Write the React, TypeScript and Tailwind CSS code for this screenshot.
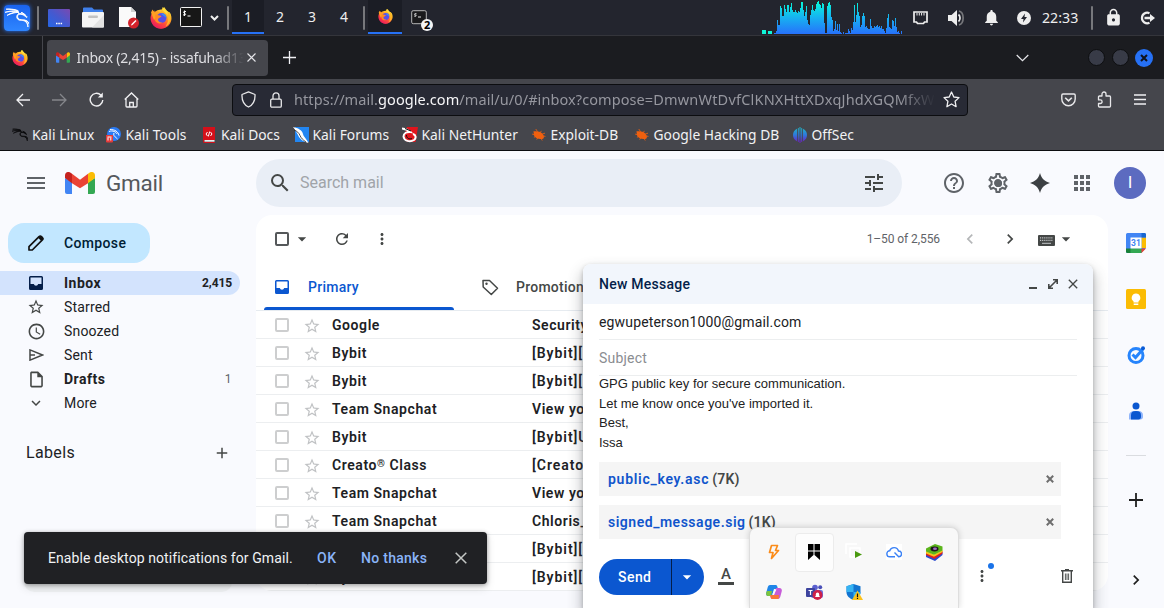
import React from 'react';
import { SiKalilinux } from 'react-icons/si';
import { FaFirefoxBrowser } from 'react-icons/fa';
import {
  MdMenu, MdSearch, MdTune, MdHelpOutline, MdOutlineSettings, MdApps, MdRefresh, MdMoreVert,
  MdArrowDropDown, MdChevronLeft, MdChevronRight, MdStarBorder, MdAccessTime,
  MdOutlineInsertDriveFile, MdExpandMore, MdAdd,
  MdClose, MdLock, MdNotifications,
} from 'react-icons/md';

const cpu = [
  1, 1, 3, 14, 9, 9, 28, 26, 18, 18, 29, 25, 22, 29, 29, 22, 27, 31, 24, 22, 22, 24, 22, 21, 23, 22, 26, 32,
  32, 24, 18, 22, 28, 14, 10, 9, 19, 24, 29, 24, 23, 25, 30, 32, 33, 30, 29, 26, 31, 30, 11, 1, 1, 28, 31, 32,
  29, 17, 14, 3, 5, 13, 4, 10, 3, 10, 2, 1, 0, 2, 0, 1, 1, 1, 5, 3, 1, 6, 4, 12, 29, 12, 19, 31, 22, 18, 7,
  9, 18, 21, 18, 7, 8, 6, 5, 5, 15, 8, 6, 6, 8, 7, 8, 9, 7, 8, 6, 8, 5, 5, 3, 1, 6, 16, 20, 7, 6, 5, 14, 13,
  8, 16, 7, 2, 3, 1, 0, 3,
];

function CpuGraph() {
  return (
    <svg width="142" height="34" viewBox="0 0 142 34" shapeRendering="crispEdges">
      <defs>
        <linearGradient id="cpu" gradientUnits="userSpaceOnUse" x1="0" y1="0" x2="0" y2="34">
          <stop offset="0" stopColor="#04ffd8" />
          <stop offset="0.5" stopColor="#16b4f0" />
          <stop offset="1" stopColor="#2771fb" />
        </linearGradient>
      </defs>
      <rect x="1" y="30" width="4" height="4" fill="#0ff5d8" />
      <rect x="7" y="31" width="4" height="3" fill="#0ff5d8" />
      {cpu.map((h, i) => (
        <rect key={i} x={13 + i} y={34 - h} width="1" height={h} fill="url(#cpu)" />
      ))}
    </svg>
  );
}

function Firefox({ size }: { size: number }) {
  return (
    <svg className="shrink-0" width={size} height={size} viewBox="0 0 22 22">
      <defs>
        <linearGradient id="fx" x1="0.85" y1="0.05" x2="0.2" y2="0.95">
          <stop offset="0" stopColor="#fff14a" />
          <stop offset="0.35" stopColor="#ffa51f" />
          <stop offset="0.65" stopColor="#ff4a3c" />
          <stop offset="1" stopColor="#e9185f" />
        </linearGradient>
      </defs>
      <circle cx="11" cy="12" r="9.500" fill="url(#fx)" />
      <FaFirefoxBrowser size={22} fill="url(#fx)" color="#ff8a1c" />
      <path d="M1 5.500l1.500-3 2 3L7 4l3 3-6 6z" fill="#ffa022" />
      <path d="M12.500 0c-.5 2 .3 3.200 1.800 4.500L19 9l1.500-1c-.8-1.800-1.500-2.500-2.500-3.200-1.200-1-3.500-1.800-5.500-4.800z" fill="#ffe03c" />
      <path d="M17.500 4c2.800 2.500 3.800 6 2.500 10-1 3-2.500 4.500-4.500 5.500 2.500-3.500 3.500-7.500 2-10.500z" fill="#ffb928" />
      <circle cx="11.500" cy="11" r="5" fill="#5a4fe6" />
      <path d="M11 7c2.500-1.500 5.500.5 5.500 4l-2-1.500z" fill="#3a8df5" />
      <path d="M5.500 7.500l6 1.500c-.5 1.500-2.500 1.800-3.500 3-.3 2.500 2 3.800 4.500 3.500-2 1.800-6 1-7.500-2z" fill="#ff8a24" />
    </svg>
  );
}

function GmailMark({ w, h }: { w: number; h: number }) {
  return (
    <svg className="shrink-0" width={w} height={h} viewBox="0 0 30 22">
      <path d="M0 6v14a2 2 0 0 0 2 2h5V10z" fill="#4285f4" />
      <path d="M30 6v14a2 2 0 0 1-2 2h-5V10z" fill="#34a853" />
      <path d="M0 3.300C0 .4 3.300-1 5.600.7L7 1.800v9.500L0 6z" fill="#c5221f" />
      <path d="M30 3.300C30 .4 26.700-1 24.400.7L23 1.800v9.500L30 6z" fill="#fbbc04" />
      <path d="M7 1.800l8 6 8-6v9.500l-8 5-8-5z" fill="#ea4335" />
    </svg>
  );
}

function Dragon({ size, color }: { size: number; color: string }) {
  return <SiKalilinux size={size} color={color} stroke={color} strokeWidth={0.9} />;
}

function PanelSep() {
  return <div className="h-6 w-[2px] shrink-0 rounded bg-[#77787c]" />;
}

function TopPanel() {
  return (
    <div className="relative flex h-[35px] items-center bg-[#23252e] text-[#eeeeee]">
      <div className="ml-[4px] flex h-[26px] w-[26px] items-center justify-center rounded-[4px] bg-[linear-gradient(180deg,#1a63ee,#2f86ff)] shadow-[0_0_4px_#2671f5]">
        <Dragon size={24} color="#fff" />
      </div>
      <div className="ml-[7px]"><PanelSep /></div>
      <svg className="ml-[9px]" width="22" height="18" viewBox="0 0 22 18">
        <defs>
          <linearGradient id="desk" x1="0" y1="1" x2="1" y2="0">
            <stop offset="0" stopColor="#2667e6" />
            <stop offset="0.5" stopColor="#4559cf" />
            <stop offset="1" stopColor="#7a49b0" />
          </linearGradient>
        </defs>
        <rect width="22" height="18" rx="1" fill="url(#desk)" />
        <path d="M8 14.500h1.500M10.300 14.500h1.500M12.600 14.500h1.500" stroke="#fff" strokeWidth="1.500" />
      </svg>
      <svg className="ml-[12px]" width="22" height="21" viewBox="0 0 22 21">
        <path d="M1 1.500A1 1 0 0 1 2 .5h8l2 2h8a1 1 0 0 1 1 1V8H1z" fill="#3f7fea" />
        <rect y="5" width="22" height="15.500" rx="1" fill="#f4f4f4" />
        <path d="M22 8v11.500a1 1 0 0 1-1 1h-11z" fill="#e2e2e2" />
        <rect x="6" y="8.500" width="10" height="2.500" rx="1.200" fill="#c2c2c2" />
      </svg>
      <svg className="ml-[15px]" width="20" height="23" viewBox="0 0 20 23">
        <path d="M0 1h12l5 5v15H0z" fill="#fafafa" />
        <path d="M12 1l5 5h-5z" fill="#cfcfcf" />
        <circle cx="14.500" cy="17" r="5.500" fill="#d3222a" />
        <path d="M12 19.500l.5-1.500 4-4 1 1-4 4z" fill="#fff" />
      </svg>
      <div className="ml-[11px]"><Firefox size={22} /></div>
      <svg className="ml-[8px] mb-px" width="22" height="20" viewBox="0 0 22 20">
        <rect x="0.500" y="0.500" width="21" height="19" rx="1" fill="#171717" stroke="#f2f2f2" />
        <path d="M6 4.700c-2.500-1-3.300 1-1.600 1.500 2 .6 1.600 2.600-1.400 1.600M4.500 3.500v5.500M7.500 9h3" stroke="#fff" strokeWidth="1" fill="none" />
      </svg>
      <svg className="ml-[8px]" width="9" height="6" viewBox="0 0 9 6"><path d="M1 1l3.500 3.500L8 1" stroke="#eee" strokeWidth="2" fill="none" /></svg>
      <div className="ml-[8px]"><PanelSep /></div>
      <div className="ml-[3px] flex self-start text-center font-['Noto_Sans',sans-serif] text-[14px] leading-[33px]">
        <div className="h-[34px] w-8 border-b-2 border-[#2671f5] bg-[#1b1d25]">1</div>
        <div className="w-8">2</div>
        <div className="w-8">3</div>
        <div className="w-8">4</div>
      </div>
      <div className="ml-[3px]"><PanelSep /></div>
      <div className="ml-[3px] flex h-[34px] w-[34px] items-center justify-center self-start border-b-2 border-[#2671f5] bg-[#1b1d25]"><Firefox size={15} /></div>
      <div className="relative ml-[9px] h-[26px] w-[24px]">
        <svg width="24" height="26" viewBox="0 0 24 26">
          <rect x="0.700" y="5.700" width="14.600" height="13" rx="1.500" fill="#1a1a1c" stroke="#b5b5b5" />
          <path d="M5.500 8.800c-2-.8-2.500.8-1.200 1.100 1.500.4 1.200 1.900-1.100 1.100M7 12h3" stroke="#fff" strokeWidth="0.900" fill="none" />
          <circle cx="16" cy="20" r="6" fill="#f4f4f4" />
        </svg>
        <span className="absolute left-[13px] top-[13px] font-['Noto_Sans',sans-serif] text-[11px] font-bold leading-[14px] text-black">2</span>
      </div>
      <div className="ml-auto flex h-[34px] self-start"><CpuGraph /></div>
      <svg className="ml-[10px]" width="15" height="14" viewBox="0 0 15 14">
        <path d="M1 1h13v10h-2.500l-1 1.500h-6l-1-1.500H1z" stroke="#eee" strokeWidth="1.700" fill="none" />
        <path d="M4 2v2.500M6.300 2v2.500M8.600 2v2.500M11 2v2.500" stroke="#eee" strokeWidth="1" />
      </svg>
      <svg className="ml-[20px]" width="18" height="18" viewBox="0 0 18 18">
        <path d="M0 6h3.500L9 1v16l-5.500-5H0z" fill="#eee" />
        <path d="M10.500 5.500c2 1.500 2 5.500 0 7" stroke="#eee" strokeWidth="1.700" fill="none" />
        <path d="M11 2c5.500 1.500 5.500 12.500 0 14" stroke="#75767a" strokeWidth="1.700" fill="none" />
      </svg>
      <MdNotifications className="ml-[16px] mb-px" size={19} />
      <svg className="ml-[16px]" width="14" height="14" viewBox="0 0 14 14">
        <circle cx="7" cy="7" r="7" fill="#eee" />
        <path d="M8 2.500L4 8h2.500L6 11.500 10 6H7.500z" fill="#23252e" />
      </svg>
      <div className="ml-[11px] w-[37px] pb-px font-['Noto_Sans',sans-serif] text-[14.200px] leading-[33px]">22:33</div>
      <div className="ml-[12px]"><PanelSep /></div>
      <MdLock className="ml-[11px] mb-px" size={19} />
      <svg className="ml-[17px] mr-[9px]" width="15" height="14" viewBox="0 0 15 14">
        <path d="M9.500 2.200A5.300 5.300 0 1 0 9.500 11.800" stroke="#eee" strokeWidth="2.200" fill="none" />
        <path d="M4.500 5.800H10V3l5 4-5 4V8.200H4.500z" fill="#eee" />
      </svg>
    </div>
  );
}

function TabStrip() {
  return (
    <div className="flex h-[44px] items-center border-t border-[#34353b] bg-[#1b1c20] font-['Noto_Sans',sans-serif] text-[14px] text-[#dedee2]">
      <div className="flex h-full w-[43px] items-center border-r border-[#45464c] pl-[12px]"><Firefox size={16} /></div>
      <div className="ml-[4px] flex h-[36px] w-[221px] items-center rounded-[4px] bg-[#45464c] pl-[9px]">
        <GmailMark w={14} h={11} />
        <div className="ml-[6.500px] w-[167px] overflow-hidden whitespace-nowrap tracking-[-0.25px] [mask-image:linear-gradient(90deg,#000_135px,transparent_167px)]">
          Inbox (2,415) - issafuhad133
        </div>
        <svg className="ml-[3px]" width="9" height="9" viewBox="0 0 9 9"><path d="M.5.500l8 8M8.500.500l-8 8" stroke="#e6e6ea" strokeWidth="1.100" /></svg>
      </div>
      <svg className="ml-[15px]" width="13" height="13" viewBox="0 0 13 13"><path d="M6.500 0v13M0 6.500h13" stroke="#f0f0f4" strokeWidth="1.300" /></svg>
      <svg className="ml-auto" width="13" height="8" viewBox="0 0 13 8"><path d="M.7 1l5.800 5.700L12.300 1" stroke="#e6e6ea" strokeWidth="1.200" fill="none" /></svg>
      <div className="ml-[59px] h-[17px] w-[17px] rounded-full border border-[#0d0e10] bg-[#383b47]" />
      <div className="ml-[7px] h-[17px] w-[17px] rounded-full border border-[#0d0e10] bg-[#383b47]" />
      <div className="ml-[6px] mr-[11px] flex h-[18px] w-[18px] items-center justify-center rounded-full bg-[#2671f5]">
        <svg width="8" height="8" viewBox="0 0 8 8"><path d="M1 1l6 6M7 1L1 7" stroke="#10131c" strokeWidth="2" /></svg>
      </div>
    </div>
  );
}

function NavBar() {
  return (
    <div className="flex h-[41px] items-center font-['Noto_Sans',sans-serif]">
      <svg className="ml-[16px]" width="15" height="14" viewBox="0 0 15 14"><path d="M14 7H1M7 1L1 7l6 6" stroke="#f0f0f2" strokeWidth="1.300" fill="none" /></svg>
      <svg className="ml-[21px]" width="15" height="14" viewBox="0 0 15 14"><path d="M0 7h13.500M8 1l6 6-6 6" stroke="#85868b" strokeWidth="1.300" fill="none" /></svg>
      <svg className="ml-[22px]" width="15" height="15" viewBox="0 0 15 15"><path d="M12 3.200A6.300 6.300 0 1 0 13.800 8" stroke="#f0f0f2" strokeWidth="1.400" fill="none" /><path d="M13.800.5v5h-5z" fill="#f0f0f2" /></svg>
      <svg className="ml-[20px]" width="15" height="16" viewBox="0 0 15 16"><path d="M.7 7.500L7.500 1l6.800 6.500M2 6.500V14a1 1 0 0 0 1 1h9a1 1 0 0 0 1-1V6.500M5.700 15v-4.500h3.600V15" stroke="#f0f0f2" strokeWidth="1.300" fill="none" /></svg>
      <div className="ml-[93px] flex h-[32px] w-[736px] items-center rounded-[4px] border border-[#0c0d10] bg-[#282a35]">
        <svg className="ml-[8px]" width="15" height="17" viewBox="0 0 15 17"><path d="M7.500.8L14 3.500c.3 5.500-1.500 10-6.500 12.500C2.500 13.500.7 9 1 3.500z" stroke="#e8e8ea" strokeWidth="1.300" fill="none" strokeLinejoin="round" /></svg>
        <svg className="ml-[14px]" width="12" height="16" viewBox="0 0 12 16"><rect x="0.700" y="7.200" width="10.600" height="8" rx="1.200" stroke="#e8e8ea" strokeWidth="1.300" fill="none" /><path d="M3 7V3.800a3 3 0 0 1 6 0V7" stroke="#e8e8ea" strokeWidth="1.300" fill="none" /></svg>
        <div className="ml-[12px] w-[641px] overflow-hidden whitespace-nowrap pb-px text-[14.5px] leading-[22px] tracking-[0.08px] text-[#96979f] [mask-image:linear-gradient(90deg,#000_605px,transparent_641px)]">
          https://mail.<span className="text-[#f6f6f8]">google.com</span>/mail/u/0/#inbox?compose=<span className="tracking-[0.2px]">DmwnWtDvfClKNXHttXDxqJhdXGQMfxW</span>
        </div>
        <svg className="ml-[8px]" width="17" height="17" viewBox="0 0 17 17"><path d="M8.500 1l2.300 5 5.200.6-3.900 3.700 1 5.400-4.600-2.700-4.600 2.700 1-5.400L1 6.600 6.200 6z" stroke="#f0f0f2" strokeWidth="1.300" fill="none" strokeLinejoin="round" /></svg>
      </div>
      <svg className="ml-[93px]" width="15" height="14" viewBox="0 0 15 14"><path d="M2 1h11a1.200 1.200 0 0 1 1.200 1.200V6A6.700 6.700 0 0 1 .8 6V2.200A1.200 1.200 0 0 1 2 1z" stroke="#e8e8ea" strokeWidth="1.400" fill="none" /><path d="M4.200 4.700l3.300 3.200 3.300-3.200" stroke="#e8e8ea" strokeWidth="1.600" fill="none" /></svg>
      <svg className="ml-[21px]" width="15" height="17" viewBox="0 0 15 17"><path d="M5 5V3a2 2 0 0 1 4 0v2h3.500a1 1 0 0 1 1 1v9a1 1 0 0 1-1 1H2.500a1 1 0 0 1-1-1v-2.500h1.800a1.800 1.800 0 0 0 0-3.600H1.500V6a1 1 0 0 1 1-1z" stroke="#e8e8ea" strokeWidth="1.300" fill="none" strokeLinejoin="round" /></svg>
      <svg className="ml-[22px]" width="12" height="11" viewBox="0 0 12 11"><path d="M0 1h12M0 5.500h12M0 10h12" stroke="#f0f0f2" strokeWidth="1.300" /></svg>
    </div>
  );
}

const ToolsIcon = () => (
  <svg width="15" height="16" viewBox="0 0 15 16">
    <circle cx="8" cy="7" r="7" fill="#2a7bf5" />
    <path d="M3 4.500c4-1.500 7 .5 8 2.500M4 2.500c5 0 8 2 9 6M8 6c-1 3 1 3.500 3.500 6" stroke="#fff" strokeWidth="1" fill="none" />
    <path d="M0 8h7v6.500a1 1 0 0 1-1 1H1a1 1 0 0 1-1-1z" fill="#e33b3b" />
    <path d="M2 10.500v3M4.800 10.500v3M1.500 10h4" stroke="#fff" strokeWidth="1" />
  </svg>
);
const DocsIcon = () => (
  <svg width="12" height="16" viewBox="0 0 12 16">
    <path d="M0 0h12v13H2a1 1 0 0 0 0 2h10v1H1.500A1.500 1.500 0 0 1 0 14.500z" fill="#d5101a" />
    <path d="M1.500 13h10v1.700h-10z" fill="#eee" />
    <path d="M4.500 5L3 7l1.500 2M7.500 5L9 7 7.500 9M6.700 4.500l-1.400 5" stroke="#fff" fill="none" />
  </svg>
);
const ForumsIcon = () => (
  <svg width="16" height="16" viewBox="0 0 16 16">
    <path d="M2 0h14v15H2z" fill="#2286f2" />
    <path d="M0 0c5 1 9 3 10 7 .6 3 3 4 5.500 9C11 15 8 13 6 10 4.500 7 3 4 0 0z" fill="#fff" />
    <path d="M1 3c3 1 5 3 6 5.500S10 13 13 15" stroke="#222" strokeWidth="0.800" fill="none" />
  </svg>
);
const NetIcon = () => (
  <svg width="16" height="16" viewBox="0 0 16 16">
    <path d="M5 0h11l-2.500 15H5L2 9z" fill="#e0141c" />
    <path d="M0 1.500c4 .5 7 2 8.500 3.500C5 4.500 1.500 6 1.500 9.500 2 14 8 15.500 12 13c2.500-2 2-5-1-6" stroke="#fff" strokeWidth="2" fill="none" />
    <path d="M3 1.500L9 4M4.500 8c0 3.500 3 4.500 5.500 3.500" stroke="#111" fill="none" />
  </svg>
);
const BugIcon = () => (
  <svg width="14" height="12" viewBox="0 0 15 13">
    <path d="M1.500 2.500c4-.5 7.500 0 9.500 2.500 2 2 2.500 4.500 1 5.500-3 .8-7 .5-9-2C1.500 6.500 2 4.500 1.500 2.500z" fill="#f0600f" />
    <path d="M0 5.500l4 1M2 9l3-1.500M4 0l2 3M10 2L9 4M14 4.500l-3 1M14.500 8l-3-.500M11 12.500L9 9M5 11.500L7 8" stroke="#f0600f" strokeWidth="0.900" />
  </svg>
);
const OffsecIcon = () => (
  <svg width="14" height="16" viewBox="0 0 14 16">
    <defs><linearGradient id="off" gradientUnits="userSpaceOnUse" x1="0" y1="1" x2="0" y2="15"><stop offset="0" stopColor="#1fb3c7" /><stop offset="0.500" stopColor="#2f78dd" /><stop offset="1" stopColor="#6a22c4" /></linearGradient></defs>
    <path d="M4 1.800v12.400C1 13 0 10.400 0 8s1-5 4-6.200zM4.800 1.300l1-.3v14l-1-.3zM6.500 0h1v16h-1zM8.200 1l1 .3v13.400l-1 .3zM10 1.800C13 3 14 5.600 14 8s-1 5-4 6.200z" fill="url(#off)" />
  </svg>
);

function Bookmarks() {
  const items: [React.ReactNode, string, string][] = [
    [<Dragon size={16} color="#08080a" />, 'Kali Linux', 'w-[93.500px]'],
    [<ToolsIcon />, 'Kali Tools', 'w-[95.500px]'],
    [<DocsIcon />, 'Kali Docs', 'w-[91.500px]'],
    [<ForumsIcon />, 'Kali Forums', 'w-[109px]'],
    [<NetIcon />, 'Kali NetHunter', 'w-[129px]'],
    [<BugIcon />, 'Exploit-DB', 'w-[103px]'],
    [<BugIcon />, 'Google Hacking DB', 'w-[158px]'],
    [<OffsecIcon />, 'OffSec', 'w-[80px]'],
  ];
  return (
    <div className="flex h-[30px] items-center pl-[12px] font-['Noto_Sans',sans-serif] text-[13.8px] text-[#f2f2f4]">
      {items.map(([icon, label, w]) => (
        <div key={label} className={'flex shrink-0 items-center whitespace-nowrap ' + w}>
          <span className="flex w-[16px] justify-center">{icon}</span>
          <span className="ml-[4px] tracking-[0.03px]">{label}</span>
        </div>
      ))}
    </div>
  );
}

function GmailHeader() {
  return (
    <div className="flex h-[64px] items-center text-[#444746]">
      <MdMenu className="ml-[24px]" size={24} color="#5f6368" />
      <div className="ml-[17px] flex w-[191px] items-center">
        <GmailMark w={30} h={22} />
        <span className="ml-[11px] pt-px text-[22.500px] tracking-[-0.250px] text-[#55585c]">Gmail</span>
      </div>
      <div className="flex h-[48px] w-[646px] items-center rounded-full bg-[#e9eef6]">
        <MdSearch className="ml-[12px]" size={24} />
        <span className="ml-[8px] text-[16px] text-[#a0a4a9]">Search mail</span>
        <MdTune className="ml-auto mr-[16px]" size={24} />
      </div>
      <MdHelpOutline className="ml-[40px]" size={24} color="#5f6368" />
      <span className="relative ml-[20px] flex items-center justify-center">
        <MdOutlineSettings size={24} color="#5f6368" />
        <span className="absolute h-[7px] w-[7px] rounded-full bg-[#5f6368]" />
      </span>
      <svg className="ml-[20px]" width="20" height="20" viewBox="0 0 20 20"><path d="M10 0c1.600 5.500 4.500 8.400 10 10-5.500 1.600-8.400 4.500-10 10-1.600-5.500-4.500-8.400-10-10 5.500-1.600 8.400-4.500 10-10z" fill="#3c4043" /></svg>
      <MdApps className="ml-[20px]" size={24} color="#5f6368" />
      <div className="ml-[20px] flex h-8 w-8 items-center justify-center rounded-full bg-[#5c6bc0] text-[17px] text-white">I</div>
    </div>
  );
}

function InboxIcon({ size }: { size: number }) {
  return (
    <svg className="shrink-0" width={size} height={size} viewBox="0 0 14 14">
      <path fillRule="evenodd" d="M1.500 0h11A1.500 1.500 0 0 1 14 1.500v11a1.500 1.500 0 0 1-1.500 1.500h-11A1.500 1.500 0 0 1 0 12.500v-11A1.500 1.500 0 0 1 1.500 0zM1.500 1.500V8h3.300a2.300 2.300 0 0 0 4.400 0h3.300V1.500z" fill="currentColor" />
    </svg>
  );
}

function SideItem({ icon, label, count, bold, active }: { icon: React.ReactNode; label: string; count?: string; bold?: boolean; active?: boolean }) {
  return (
    <div className={'flex h-[24px] w-[240px] items-center pl-[26px] pr-[8px] text-[14px] text-[#202124] ' + (active ? 'rounded-r-full bg-[#d3e3fd] text-[#001d35] ' : '') + (bold ? 'font-bold tracking-[0.5px]' : 'tracking-[0.17px]')}>
      <span className="flex w-[20px] justify-center text-[#444746]">{icon}</span>
      <span className="ml-[18px]">{label}</span>
      <span className={'ml-auto text-[12px] ' + (active ? 'font-bold tracking-[-0.1px]' : 'font-normal text-[#5f6368]')}>{count}</span>
    </div>
  );
}

function Sidebar() {
  return (
    <div className="flex w-[256px] shrink-0 flex-col">
      <div className="ml-[8px] mt-[8px] flex h-[40px] w-[142px] items-center rounded-[16px] bg-[#c2e7ff] pl-[20px] text-[14px] font-medium tracking-[0.35px] text-[#001d35]">
        <svg width="16" height="16" viewBox="0 0 16 16">
          <path d="M1 15v-3.300L11.300 1.400a1.300 1.300 0 0 1 1.900 0l1.400 1.400a1.300 1.300 0 0 1 0 1.900L4.300 15z" stroke="#111" strokeWidth="1.700" fill="none" strokeLinejoin="round" />
          <path d="M10 2.700L12.200.8l3 3-1.900 2.200z" fill="#111" />
        </svg>
        <span className="ml-[20px]">Compose</span>
      </div>
      <div className="mt-[8px]">
        <SideItem icon={<span className="text-[#041e49]"><InboxIcon size={14} /></span>} label="Inbox" count="2,415" bold active />
        <SideItem icon={<MdStarBorder size={18} />} label="Starred" />
        <SideItem icon={<MdAccessTime size={19} />} label="Snoozed" />
        <SideItem icon={<svg width="15" height="12" viewBox="0 0 15 12"><path d="M1 .9L13.500 6 1 11.100zM1 6h5" stroke="currentColor" strokeWidth="1.500" fill="none" /></svg>} label="Sent" />
        <SideItem icon={<MdOutlineInsertDriveFile size={19} />} label="Drafts" count="1" bold />
        <SideItem icon={<MdExpandMore size={18} />} label="More" />
      </div>
      <div className="mt-[26px] flex h-[24px] w-[256px] items-center pl-[26px] text-[16px] tracking-[0.35px] text-[#202124]">
        Labels
        <MdAdd className="ml-auto mr-[25px]" size={18} color="#444746" />
      </div>
      <div className="ml-[24px] mt-[107px] h-[20px] w-[208px] rounded-[12px] bg-[#f0f2f4]" />
    </div>
  );
}

const mails: [React.ReactNode, string][] = [
  ['Google', 'Security'],
  ['Bybit', '[Bybit]['],
  ['Bybit', '[Bybit]['],
  ['Team Snapchat', 'View yo'],
  ['Bybit', '[Bybit]Update'],
  [<>Creato<span className="relative top-[-3px] text-[10px]">®</span> Class</>, '[Creato® Class]'],
  ['Team Snapchat', 'View yo'],
  ['Team Snapchat', 'Chloris_'],
  ['Bybit', '[Bybit]['],
  ['Bybit', '[Bybit]['],
];

function MailCard() {
  return (
    <div className="h-[376px] w-[852px] shrink-0 overflow-hidden rounded-[16px] bg-white text-[#444746]">
      <div className="flex h-[48px] items-center">
        <div className="ml-[19px] h-[14px] w-[14px] rounded-[2px] border-2 border-[#55585a]" />
        <MdArrowDropDown className="ml-[3px]" size={20} />
        <MdRefresh className="ml-[21px]" size={18} />
        <MdMoreVert className="ml-[22px]" size={18} />
        <span className="ml-auto text-[12px] tracking-[-0.08px] text-[#5f6368]">1–50 of 2,556</span>
        <MdChevronLeft className="ml-[20px]" size={20} color="#b4b6b8" />
        <MdChevronRight className="ml-[20px]" size={20} />
        <svg className="mb-[-2px] ml-[18px]" width="17" height="11" viewBox="0 0 17 11">
          <rect width="17" height="11" rx="1" fill="#444746" />
          <path d="M2 2.800h13M2 5.300h13" stroke="#c4c6c8" strokeWidth="1.200" strokeDasharray="1.200 0.900" />
          <path d="M4 8.300h9" stroke="#c4c6c8" strokeWidth="1" />
        </svg>
        <MdArrowDropDown className="ml-[1px] mr-[32px]" size={20} />
      </div>
      <div className="flex h-[48px] border-b border-[#e6ebf0] text-[14px] font-medium tracking-[0.25px]">
        <div className="ml-[8px] flex w-[190px] flex-col text-[#0b57d0]">
          <div className="flex h-[45px] items-center pt-[4px]">
            <span className="ml-[11px]"><InboxIcon size={14} /></span>
            <span className="ml-[19px]">Primary</span>
          </div>
          <div className="h-[3px] w-[190px] rounded-t-[3px] bg-[#0b57d0]" />
        </div>
        <div className="ml-[28px] flex h-[48px] items-center">
          <svg width="17" height="17" viewBox="0 0 17 17"><path d="M1 1.500h6.500l8 7.700-6.200 6.300L1.200 8z" stroke="#444746" strokeWidth="1.500" fill="none" strokeLinejoin="round" /><circle cx="4.500" cy="4.800" r="1.200" fill="#444746" /></svg>
          <span className="ml-[17px] pt-px">Promotions</span>
        </div>
      </div>
      {mails.map(([from, subject], i) => (
        <div key={i} className="flex h-[28px] items-center border-b border-[#eceef0] text-[14px] font-semibold tracking-[0.57px] text-[#202124]">
          <div className="ml-[19px] h-[14px] w-[14px] rounded-[2px] border-2 border-[#cdcecf]" />
          <MdStarBorder className="ml-[14px] mt-[2px]" size={18} color="#c0c2c4" />
          <span className="ml-[11px] w-[200px] pt-[2px]">{from}</span>
          <span className={'whitespace-nowrap pt-[2px] ' + (subject.startsWith('[') ? 'tracking-[0.95px]' : '')}>{subject}</span>
        </div>
      ))}
    </div>
  );
}

function Rail() {
  return (
    <div className="flex w-[56px] flex-col items-center pt-[18px]">
      <svg width="20" height="20" viewBox="0 0 20 20">
        <path d="M1.500 0h17A1.500 1.500 0 0 1 20 1.500V15l-5 5H1.500A1.500 1.500 0 0 1 0 18.500v-17A1.500 1.500 0 0 1 1.500 0z" fill="#4285f4" />
        <path d="M15.500 4.500H20V15h-4.500z" fill="#fbbc04" /><path d="M15.500 0h3A1.500 1.500 0 0 1 20 1.500v3h-4.500z" fill="#1967d2" />
        <path d="M0 15.500h15.500V20H1.500A1.500 1.500 0 0 1 0 18.500z" fill="#188038" /><path d="M4.500 15.500h11V20h-11z" fill="#34a853" />
        <path d="M15.500 15.500H20L15.500 20z" fill="#ea4335" /><path d="M4.500 4.500h11v11h-11z" fill="#fff" />
        <text x="10" y="13.200" textAnchor="middle" fontFamily="Roboto, sans-serif" fontSize="8.500" fontWeight="700" fill="#4285f4">31</text>
      </svg>
      <svg className="mt-[36px]" width="20" height="20" viewBox="0 0 20 20">
        <rect width="20" height="20" rx="1.500" fill="#fbbc04" />
        <path d="M10 4.500a4.300 4.300 0 0 0-2.500 7.800V13.500h5v-1.200A4.300 4.300 0 0 0 10 4.500zM7.700 14.500h4.600V16H7.700z" fill="#fff" />
      </svg>
      <svg className="mt-[36px]" width="20" height="20" viewBox="0 0 20 20">
        <circle cx="10" cy="10.500" r="7" stroke="#2684fc" strokeWidth="3" fill="none" />
        <path d="M6.500 9.500l3 3L17 4" stroke="#2684fc" strokeWidth="3" fill="none" />
        <circle cx="17" cy="3.300" r="2" fill="#0a5bd6" />
      </svg>
      <svg className="mt-[37px]" width="16" height="18" viewBox="0 0 16 18">
        <circle cx="8" cy="4" r="3.500" fill="#0b57d0" />
        <path d="M1 13.500C1 10.500 3.500 9 6 9h4.500c3 0 4.500 1.500 4.500 4.500V15c0 1.500-1 2.500-2.500 2.500H1z" fill="#8fb4fa" />
        <path d="M3 13c0-2.500 1.500-4 5-4s5 1.500 5 4v2c0 1.500-1 2.500-2.500 2.500H3z" fill="#0b57d0" />
      </svg>
      <div className="mt-[35px] h-px w-[20px] bg-[#dadce0]" />
      <svg className="mt-[37px]" width="14" height="14" viewBox="0 0 14 14"><path d="M7 0v14M0 7h14" stroke="#1f1f1f" strokeWidth="1.800" /></svg>
      <MdChevronRight className="mt-[63px]" size={20} color="#1f1f1f" />
    </div>
  );
}

function Attachment({ name, size, nameClass }: { name: string; size: string; nameClass: string }) {
  return (
    <div className="flex h-[34px] w-[462px] items-center bg-[#f5f5f5] pl-[9px] text-[14px] font-semibold text-[#444746]">
      <span className={'text-[#1155cc] ' + nameClass}>{name}</span>
      <span className="ml-[3px] tracking-[0.2px]">{size}</span>
      <svg className="ml-auto mr-[7px]" width="8" height="8" viewBox="0 0 8 8"><path d="M.8.8l6.400 6.400M7.200.8L.8 7.200" stroke="#6e6e6e" strokeWidth="2" /></svg>
    </div>
  );
}

function ComposeWindow() {
  return (
    <div className="absolute left-[583px] top-[264px] h-[344px] w-[510px] overflow-visible rounded-t-[8px] bg-white shadow-[0_8px_14px_2px_rgba(60,64,67,0.3),0_2px_4px_rgba(60,64,67,0.3)]">
      <div className="flex h-[40px] items-center rounded-t-[8px] bg-[#f2f6fc] pl-[16px] text-[14px] font-medium tracking-[0.25px] text-[#041e49]">
        New Message
        <div className="ml-auto mt-[8px] h-[2px] w-[8px] bg-[#444746]" />
        <svg className="ml-[11px]" width="10" height="10" viewBox="0 0 10 10"><path d="M5 .8h4.200V5M9 1L1 9M.8 5v4.200H5" stroke="#444746" strokeWidth="1.600" fill="none" /></svg>
        <MdClose className="ml-[7px] mr-[12px]" size={16} color="#444746" />
      </div>
      <div className="mx-[16px] flex h-[36px] items-center border-b border-[#eceeef] pt-[2px] text-[14px] tracking-[0.16px] text-[#202124]">egwupeterson1000@gmail.com</div>
      <div className="mx-[16px] flex h-[36px] items-center border-b border-[#eceeef] pt-[2px] text-[14px] tracking-[0.2px] text-[#8a8d91]">Subject</div>
      <div className="mx-[16px] mt-[-2px] font-['Liberation_Sans',Arial,sans-serif] text-[13px] leading-[19.500px] text-[#222]">
        GPG public key for secure communication.<br />Let me know once you've imported it.<br />Best,<br />Issa
      </div>
      <div className="ml-[16px] mt-[10px] flex flex-col gap-[9px]">
        <Attachment name="public_key.asc" size="(7K)" nameClass="tracking-[0.72px]" />
        <Attachment name="signed_message.sig" size="(1K)" nameClass="tracking-[0.52px]" />
      </div>
      <div className="ml-[16px] mt-[20px] flex h-[36px] items-center">
        <div className="flex h-[36px] w-[105px] items-center rounded-full bg-[#0b57d0] text-[14px] font-medium tracking-[0.45px] text-white">
          <span className="w-[72px] pl-[19px]">Send</span>
          <span className="flex h-[36px] w-[33px] items-center border-l border-[#041e49] pl-[5px]"><MdArrowDropDown size={20} /></span>
        </div>
        <div className="ml-[14px] mt-[-2px] flex h-[17px] w-[16px] flex-col items-center justify-between border-b-[3px] border-[#444746] text-[15px] font-medium leading-[13px] text-[#444746]">A</div>
        <div className="relative ml-auto mr-[63px] mt-[-2px] flex">
          <MdMoreVert size={18} color="#444746" className="mr-[7px]" />
          <div className="absolute left-[15px] top-[-4px] h-[6px] w-[6px] rounded-full bg-[#1a73e8]" />
        </div>
        <svg className="mr-[20px] mt-[-2px]" width="12" height="14" viewBox="0 0 12 14"><path d="M0 1.800h12M4 .7h4M1.700 2v11.300h8.600V2" stroke="#444746" strokeWidth="1.400" fill="none" /><path d="M4.400 4.500v6.500M6 4.500v6.500M7.600 4.500v6.500" stroke="#444746" strokeWidth="0.900" /></svg>
      </div>
      <TrayPopup />
    </div>
  );
}

function TrayPopup() {
  return (
    <div className="absolute left-[166px] top-[263px] grid h-[81px] w-[210px] grid-cols-[repeat(5,40px)] grid-rows-[48px_32px] rounded-t-[8px] border border-b-0 border-[#dedede] bg-[#f8f8f8] pl-[4px] shadow-[0_0_6px_rgba(0,0,0,0.16)]">
      <div className="flex items-center justify-center">
        <svg width="14" height="16" viewBox="0 0 14 16"><path d="M8 1.500H4.500L2.500 8.500H6L4.500 14.500 11.500 6.500H8.500L10.500 1.500z" stroke="#fb8c1a" strokeWidth="1.700" fill="none" strokeLinejoin="round" /></svg>
      </div>
      <div className="m-auto flex h-[39px] w-[39px] items-center justify-center rounded-[4px] border border-[#ececec] bg-[#fdfdfd]">
        <svg width="12" height="16" viewBox="0 0 12 16"><path d="M0 0h5.500v6.500H0zM6.500 0H12v6.500H6.500zM0 7.500h5.500V11L0 16zM6.500 7.500H12V16l-5.500-5z" fill="#000" /></svg>
      </div>
      <div className="flex items-center justify-center">
        <svg width="18" height="18" viewBox="0 0 18 18"><path d="M1 11V1h11M5 14V5h10v9z" stroke="#fff" strokeWidth="1.500" fill="none" /><path d="M10 8v7l7-3.500z" fill="#4a9a10" /></svg>
      </div>
      <div className="flex items-center justify-center">
        <svg width="16" height="16" viewBox="0 0 16 16"><rect width="16" height="16" fill="#fff" /><path d="M9 12.800H4a3 3 0 0 1-.3-6A4.600 4.600 0 0 1 12.500 7a2.900 2.900 0 0 1 .2 5.800L8.500 8.500" stroke="#3b82f6" strokeWidth="1.400" fill="none" /></svg>
      </div>
      <div className="flex items-center justify-center">
        <svg width="17" height="17" viewBox="0 0 17 17">
          <path d="M0 9l8 4 8.500-5v3L9 17 0 13z" fill="#2a4ad0" /><path d="M0 8l8 4 8.500-5v2.500L8.500 15 0 11z" fill="#e02020" /><path d="M0 7l8 3.500L16.500 6v2L8 12.800 0 9.500z" fill="#f7c21a" />
          <path d="M0 4.500L9 0l7.500 2.500v4L8 10.800 0 7.500z" fill="#5cb51c" /><ellipse cx="8.500" cy="5" rx="4" ry="2.400" fill="#1a1a1a" /><ellipse cx="9" cy="4.700" rx="2" ry="1.200" fill="#a06ac0" />
        </svg>
      </div>
      <div className="flex items-center justify-center">
        <svg width="16" height="16" viewBox="0 0 16 16">
          <path d="M4 1h5.500c1 0 1.500.5 1.800 1.500L12 5H8L6 12H2.500C.5 12-.2 10.500.3 8.500l1.500-5.500C2.200 1.700 3 1 4 1z" fill="#1f86e8" />
          <path d="M1 7l5 0-1 5H2.500C.5 12-.2 10.500.3 8.500z" fill="#7cc440" />
          <path d="M12 15H6.500c-1 0-1.500-.5-1.800-1.500L4 11h4l2-7h3.500c2 0 2.700 1.500 2.200 3.500l-1.500 5.500C13.800 14.300 13 15 12 15z" fill="#c65bd8" />
          <path d="M12 15H6.500c-1 0-1.500-.5-1.800-1.500L4 11h9l-.5 4z" fill="#f8763a" />
          <path d="M8.500 5.500h2L8 10.500H6.300z" fill="#f8f8f8" />
        </svg>
      </div>
      <div className="flex items-center justify-center">
        <svg width="17" height="16" viewBox="0 0 17 16">
          <circle cx="9" cy="3.500" r="2.800" fill="#5b60d0" /><circle cx="14.200" cy="3.300" r="2" fill="#4a50b8" /><rect x="5" y="6" width="12" height="8" rx="2" fill="#6a6fdc" />
          <rect y="4" width="9" height="9" rx="1" fill="#3d449e" /><path d="M2.500 6.500h4M4.500 6.500v4.500" stroke="#fff" strokeWidth="1.200" />
          <circle cx="11.500" cy="11" r="5" fill="#cf1f48" /><path d="M9 13l.8-1.300v-1.500a1.700 1.700 0 0 1 3.400 0v1.500L14 13z" fill="#fff" />
        </svg>
      </div>
      <div className="flex items-center justify-center">
        <svg width="17" height="17" viewBox="0 0 17 17">
          <path d="M7.500 0l7 2.200V8c0 4-3 6.500-7 8-4-1.500-7-4-7-8V2.200z" fill="#1274d0" /><path d="M7.500 0v8h-7V2.200zM7.500 8h7c0 4-3 6.500-7 8z" fill="#36b3f2" />
          <path d="M11.500 6.500L17 16H6z" fill="#fbc21c" /><path d="M11.500 9.500v3.500M11.500 13.700v1.300" stroke="#111" strokeWidth="1.200" />
        </svg>
      </div>
    </div>
  );
}

function Toast() {
  return (
    <div className="absolute left-[24px] top-[532px] flex h-[52px] w-[463px] items-center whitespace-nowrap rounded-[4px] bg-[#202124] pl-[24px] text-[14px] text-[#f1f3f4] shadow-[0_1px_4px_rgba(0,0,0,0.35),0_4px_10px_rgba(0,0,0,0.12)]">
      <span className="w-[269px] tracking-[0.09px]">Enable desktop notifications for Gmail.</span>
      <span className="w-[44px] font-medium tracking-[0.7px] text-[#8ab4f8]">OK</span>
      <span className="w-[93px] font-medium tracking-[0.28px] text-[#8ab4f8]">No thanks</span>
      <svg className="ml-[1px]" width="12" height="12" viewBox="0 0 12 12"><path d="M.7.700l10.600 10.600M11.300.700L.7 11.300" stroke="#c4c7c5" strokeWidth="1.500" /></svg>
    </div>
  );
}

export default function App() {
  return (
    <div className="relative h-[608px] w-[1164px] overflow-hidden bg-[#f9fafe] font-[Roboto,sans-serif]">
      <TopPanel />
      <TabStrip />
      <div className="h-[72px] border-b border-[#0c0d10] bg-[#45464c]">
        <NavBar />
        <Bookmarks />
      </div>
      <GmailHeader />
      <div className="flex">
        <Sidebar />
        <MailCard />
        <Rail />
      </div>
      <ComposeWindow />
      <Toast />
    </div>
  );
}
